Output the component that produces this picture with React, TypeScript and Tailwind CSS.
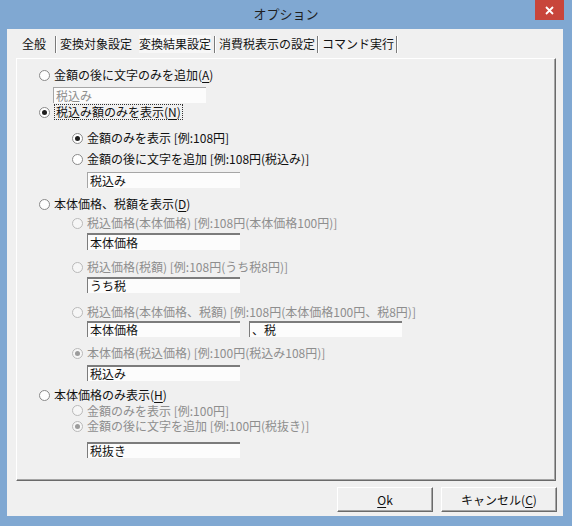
import React from 'react';

interface RadioRowProps {
  label: React.ReactNode;
  level?: 0 | 1;
  checked?: boolean;
  disabled?: boolean;
  focused?: boolean;
  className?: string;
}

const Radio: React.FC<{ checked?: boolean; disabled?: boolean }> = ({ checked, disabled }) => (
  <span
    className={`flex h-[11px] w-[11px] shrink-0 items-center justify-center rounded-full border ${
      disabled ? 'border-[#b9b9b9] bg-[#f6f6f6]' : 'border-[#8a8a8a] bg-white'
    }`}
  >
    {checked && <span className={`h-[5px] w-[5px] rounded-full ${disabled ? 'bg-[#9c9c9c]' : 'bg-[#1e1e1e]'}`} />}
  </span>
);

const RadioRow: React.FC<RadioRowProps> = ({ label, level = 0, checked, disabled, focused, className = '' }) => (
  <div className={`flex h-[16px] items-center ${level === 0 ? 'ml-[22px]' : 'ml-[55px]'} ${className}`}>
    <Radio checked={checked} disabled={disabled} />
    <span
      className={`ml-[4px] whitespace-nowrap leading-[14px] ${disabled ? 'text-[#8e8e8e]' : 'text-[#111]'} ${
        focused ? '-ml-[0px] border border-dotted border-[#333] px-[1px]' : ''
      }`}
    >
      {label}
    </span>
  </div>
);

const TextBox: React.FC<{ value: string; muted?: boolean; deep?: boolean; className?: string }> = ({
  value,
  muted,
  deep,
  className = '',
}) => (
  <div
    className={`flex h-[16px] w-[153px] items-center bg-[#fcfcfc] pl-[2px] leading-[14px] ${
      deep
        ? 'border-t-2 border-l border-t-[#7c7c7c] border-l-[#7c7c7c]'
        : 'border-t border-l border-t-[#a6a6a6] border-l-[#a6a6a6]'
    } ${muted ? 'text-[#8e8e8e]' : 'text-[#111]'} ${className}`}
  >
    {value}
  </div>
);

const U: React.FC<{ children: React.ReactNode }> = ({ children }) => <span className="underline underline-offset-2">{children}</span>;

const Sep = ({ className = '' }: { className?: string }) => (
  <span className={`h-[17px] w-[2px] border-l border-r border-l-[#7a7a7a] border-r-white ${className}`} />
);

export default function App() {
  return (
    <div className="flex h-[526px] w-[572px] flex-col bg-[#80a8d2] font-['Noto_Sans_CJK_JP','Noto_Sans',sans-serif] text-[12px]">
      {/* title bar */}
      <div className="relative flex h-[29px] shrink-0 items-center justify-center pb-[1px]">
        <span className="text-[13px] text-[#1f1f1f]">オプション</span>
        <div className="absolute left-[535px] top-0 flex h-[20px] w-[29px] items-center justify-center bg-[#c8453b]">
          <svg width="9" height="9" viewBox="0 0 9 9">
            <path d="M1 1L8 8M8 1L1 8" stroke="#fff" strokeWidth="1.8" />
          </svg>
        </div>
      </div>

      {/* client */}
      <div className="ml-[7px] mr-[9px] mb-[10px] flex flex-1 flex-col bg-[#f0f0f0]">
        {/* tabs */}
        <div className="flex h-[29px] items-center pl-[15px] pt-[1px] text-[#111]">
          <span>全般</span>
          <Sep className="ml-[9px]" />
          <span className="ml-[3px]">変換対象設定</span>
          <span className="ml-[7px] bg-[#f7f7f7]">変換結果設定</span>
          <Sep className="ml-[3px]" />
          <span className="ml-[3px]">消費税表示の設定</span>
          <Sep className="ml-[2px]" />
          <span className="ml-[3px]">コマンド実行</span>
          <Sep className="ml-[2px]" />
        </div>

        {/* panel */}
        <div className="ml-[9px] mr-[7px] flex h-[423px] flex-col border border-t-white border-l-white border-r-[#6a6a6a] border-b-[#6a6a6a] shadow-[inset_-1px_-1px_0_#a5a5a5]">
          <RadioRow className="mt-[8px]" label={<>金額の後に文字のみを追加(<U>A</U>)</>} />
          <TextBox className="ml-[36px] mt-[4px]" value="税込み" muted />

          <RadioRow className="mt-[1px]" checked focused label={<>税込み額のみを表示(<U>N</U>)</>} />
          <RadioRow className="mt-[10px]" level={1} checked label="金額のみを表示 [例:108円]" />
          <RadioRow className="mt-[5px]" level={1} label="金額の後に文字を追加 [例:108円(税込み)]" />
          <TextBox className="ml-[70px] mt-[5px]" value="税込み" />

          <RadioRow className="mt-[8px]" label={<>本体価格、税額を表示(<U>D</U>)</>} />
          <RadioRow className="mt-[3px]" level={1} disabled label="税込価格(本体価格) [例:108円(本体価格100円)]" />
          <TextBox className="ml-[70px] mt-[2px] h-[17px]" value="本体価格" deep />
          <RadioRow className="mt-[9px]" level={1} disabled label="税込価格(税額) [例:108円(うち税8円)]" />
          <TextBox className="ml-[70px] mt-[2px]" value="うち税" deep />
          <RadioRow className="mt-[11px]" level={1} disabled label="税込価格(本体価格、税額) [例:108円(本体価格100円、税8円)]" />
          <div className="ml-[70px] mt-[1px] flex gap-[9px]">
            <TextBox value="本体価格" deep />
            <TextBox value="、税" deep />
          </div>
          <RadioRow className="mt-[8px]" level={1} checked disabled label="本体価格(税込価格) [例:100円(税込み108円)]" />
          <TextBox className="ml-[70px] mt-[4px]" value="税込み" deep />

          <RadioRow className="mt-[6px]" label={<>本体価格のみ表示(<U>H</U>)</>} />
          <RadioRow className="h-[15px]!" level={1} disabled label="金額のみを表示 [例:100円]" />
          <RadioRow level={1} checked disabled label="金額の後に文字を追加 [例:100円(税抜き)]" />
          <TextBox className="ml-[70px] mt-[8px]" value="税抜き" deep />
        </div>

        {/* buttons */}
        <div className="mt-[6px] flex justify-end gap-[8px] pr-[6px]">
          <button className="flex h-[25px] w-[96px] items-center justify-center border border-t-white border-l-white border-r-[#6a6a6a] border-b-[#6a6a6a] bg-[#f0f0f0] text-[#111] shadow-[inset_-1px_-1px_0_#a5a5a5]">
            <U>O</U>k
          </button>
          <button className="flex h-[25px] w-[116px] items-center justify-center border border-t-white border-l-white border-r-[#6a6a6a] border-b-[#6a6a6a] bg-[#f0f0f0] text-[#111] shadow-[inset_-1px_-1px_0_#a5a5a5]">
            キャンセル(<U>C</U>)
          </button>
        </div>
      </div>
    </div>
  );
}
